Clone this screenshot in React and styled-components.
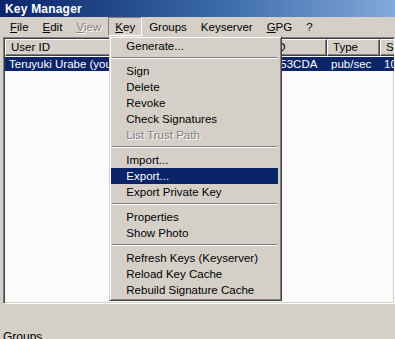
import React from "react";
import styled, { createGlobalStyle } from "styled-components";

const GlobalStyle = createGlobalStyle`
  html, body {
    margin: 0;
    padding: 0;
    background: #d4d0c8;
    overflow: hidden;
  }
`;

const Window = styled.div`
  width: 395px;
  height: 339px;
  overflow: hidden;
  background: #d4d0c8;
  font-family: "Liberation Sans", Arial, sans-serif;
  font-size: 11.5px;
  color: #000;
  display: flex;
  flex-direction: column;
`;

const TitleBar = styled.div`
  height: 17px;
  flex: none;
  display: flex;
  align-items: center;
  padding-left: 5px;
  background: linear-gradient(to right, #0a246a 0%, #3a6aa8 55%, #84a8da 100%);
  color: #fff;
  font-size: 12px;
  font-weight: 700;
  letter-spacing: 0.2px;
`;

const MenuBar = styled.div`
  height: 19px;
  flex: none;
  display: flex;
  padding: 0 0 1px 3px;
`;

const MenuTitle = styled.div`
  position: relative;
  display: flex;
  align-items: center;
  padding: 0 6px;
  border: 1px solid transparent;
  color: ${(p) => (p.$disabled ? "#808080" : "#000")};
  text-shadow: ${(p) => (p.$disabled ? "1px 1px 0 #fff" : "none")};
  ${(p) =>
    p.$open &&
    `
    border-color: #808080 #fff #fff #808080;
  `}

  u {
    text-decoration: underline;
    text-underline-offset: 1px;
  }
`;

const Dropdown = styled.div`
  position: absolute;
  top: calc(100% + 1px);
  left: 0;
  width: 173px;
  box-sizing: border-box;
  z-index: 10;
  background: #d4d0c8;
  border: 1px solid;
  border-color: #d4d0c8 #404040 #404040 #d4d0c8;
  box-shadow: inset 1px 1px 0 #fff, inset -1px -1px 0 #808080;
  padding: 1px 3px 2px 1px;
  text-shadow: none;
`;

const MenuItem = styled.div`
  height: 16px;
  line-height: 16px;
  padding-left: 15px;
  white-space: nowrap;
  background: ${(p) => (p.$active ? "#0a246a" : "transparent")};
  color: ${(p) => (p.$active ? "#fff" : p.$disabled ? "#808080" : "#000")};
  text-shadow: ${(p) => (p.$disabled ? "1px 1px 0 #fff" : "none")};
`;

const Separator = styled.div`
  margin: 3px 1px 4px;
  border-top: 1px solid #808080;
  border-bottom: 1px solid #fff;
`;

const ListView = styled.div`
  flex: none;
  height: 267px;
  margin-left: 3px;
  box-sizing: border-box;
  border: 1px solid;
  border-color: #808080 #fff #fff #808080;
  box-shadow: inset 1px 1px 0 #404040, inset -1px -1px 0 #d4d0c8;
  padding: 1px 0 0 1px;
  background: #fbfbfb;
  overflow: hidden;
`;

const Grid = styled.div`
  display: grid;
  grid-template-columns: 240px 82px 53px 80px;
`;

const HeaderCell = styled.div`
  height: 17px;
  line-height: 15px;
  padding-left: 5px;
  box-sizing: border-box;
  background: #d4d0c8;
  border: 1px solid;
  border-color: #fff #404040 #404040 #fff;
  box-shadow: inset -1px -1px 0 #808080;
  white-space: nowrap;
  overflow: hidden;
`;

const Row = styled(Grid)`
  margin-top: 1px;
  background: ${(p) => (p.$selected ? "#0a246a" : "transparent")};
  color: ${(p) => (p.$selected ? "#fff" : "#000")};
`;

const Cell = styled.div`
  height: 14px;
  line-height: 14px;
  padding-left: 4px;
  white-space: nowrap;
  overflow: hidden;
`;

const GroupsLabel = styled.div`
  margin: 26px 0 0 3px;
  font-size: 12px;
`;

const menus = [
  { label: "File", key: "F" },
  { label: "Edit", key: "E" },
  { label: "View", key: "V", disabled: true },
  { label: "Key", key: "K", open: true },
  { label: "Groups" },
  { label: "Keyserver" },
  { label: "GPG", key: "G" },
  { label: "?" },
];

const keyMenu = [
  { label: "Generate..." },
  "-",
  { label: "Sign" },
  { label: "Delete" },
  { label: "Revoke" },
  { label: "Check Signatures" },
  { label: "List Trust Path", disabled: true },
  "-",
  { label: "Import..." },
  { label: "Export...", active: true },
  { label: "Export Private Key" },
  "-",
  { label: "Properties" },
  { label: "Show Photo" },
  "-",
  { label: "Refresh Keys (Keyserver)" },
  { label: "Reload Key Cache" },
  { label: "Rebuild Signature Cache" },
];

const columns = ["User ID", "Key ID", "Type", "Size"];

const keys = [
  { user: "Teruyuki Urabe (your email address)", id: "0x07053CDA", type: "pub/sec", size: "1024" },
];

const MenuLabel = ({ label, accel }) => {
  if (!accel) return label;
  return (
    <>
      <u>{label[0]}</u>
      {label.slice(1)}
    </>
  );
};

const App = () => {
  return (
    <>
      <GlobalStyle />
      <Window>
        <TitleBar>Key Manager</TitleBar>
        <MenuBar>
          {menus.map((m) => (
            <MenuTitle key={m.label} $open={m.open} $disabled={m.disabled}>
              <MenuLabel label={m.label} accel={m.key} />
              {m.open && (
                <Dropdown>
                  {keyMenu.map((item, i) =>
                    item === "-" ? (
                      <Separator key={i} />
                    ) : (
                      <MenuItem key={i} $active={item.active} $disabled={item.disabled}>
                        {item.label}
                      </MenuItem>
                    )
                  )}
                </Dropdown>
              )}
            </MenuTitle>
          ))}
        </MenuBar>
        <ListView>
          <Grid>
            {columns.map((c) => (
              <HeaderCell key={c}>{c}</HeaderCell>
            ))}
          </Grid>
          {keys.map((k) => (
            <Row key={k.id} $selected>
              <Cell>{k.user}</Cell>
              <Cell>{k.id}</Cell>
              <Cell>{k.type}</Cell>
              <Cell>{k.size}</Cell>
            </Row>
          ))}
        </ListView>
        <GroupsLabel>Groups</GroupsLabel>
      </Window>
    </>
  );
};

export default App;
